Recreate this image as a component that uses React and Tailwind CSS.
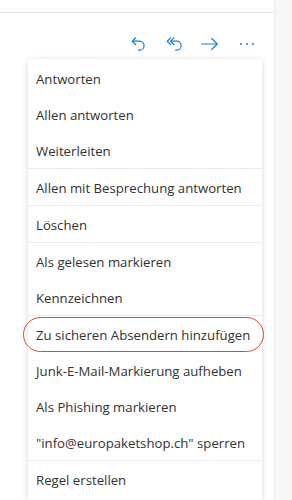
const groups = [
  ["Antworten", "Allen antworten", "Weiterleiten"],
  ["Allen mit Besprechung antworten"],
  ["Löschen"],
  ["Als gelesen markieren", "Kennzeichnen"],
  ["Zu sicheren Absendern hinzufügen", "Junk-E-Mail-Markierung aufheben", "Als Phishing markieren", '"info@europaketshop.ch" sperren'],
  ["Regel erstellen"],
];

function ReplyIcon() {
  return (
    <svg width="18" height="18" viewBox="0 0 16 16" fill="none" stroke="currentColor" strokeWidth="1.1" strokeLinecap="round" strokeLinejoin="round">
      <path d="M5 2.5 2 5.5l3 3" />
      <path d="M2.5 5.5h6a4 4 0 0 1 0 8H7.5" />
    </svg>
  );
}

function ReplyAllIcon() {
  return (
    <svg width="20" height="18" viewBox="0 0 18 16" fill="none" stroke="currentColor" strokeWidth="1.1" strokeLinecap="round" strokeLinejoin="round">
      <path d="M5 2.5 2 5.5l3 3" />
      <path d="M8 2.5 5 5.5l3 3" />
      <path d="M5.5 5.5h5a4 4 0 0 1 0 8h-1" />
    </svg>
  );
}

function ForwardIcon() {
  return (
    <svg width="20" height="18" viewBox="0 0 18 16" fill="none" stroke="currentColor" strokeWidth="1.1" strokeLinecap="round" strokeLinejoin="round">
      <path d="M1.5 8h14" />
      <path d="M10.5 3l5 5-5 5" />
    </svg>
  );
}

export default function App() {
  return (
    <div className="flex h-[500px] w-[292px] overflow-hidden bg-white" style={{ fontFamily: '"Open Sans", "Noto Sans", sans-serif' }}>
      <div className="flex w-[274px] flex-col">
        <div className="h-[13px] border-b border-[#e6e6e6]" />
        <div className="flex h-[46px] items-start justify-end pr-[20px] pt-[22px] text-[#1a7fd4]">
          <ReplyIcon />
          <div className="ml-[17px]">
            <ReplyAllIcon />
          </div>
          <div className="ml-[15px]">
            <ForwardIcon />
          </div>
          <div className="ml-[20px] flex h-[18px] items-center gap-[4px]">
            <span className="h-[2px] w-[2px] rounded-full bg-[#1a7fd4]" />
            <span className="h-[2px] w-[2px] rounded-full bg-[#1a7fd4]" />
            <span className="h-[2px] w-[2px] rounded-full bg-[#1a7fd4]" />
          </div>
        </div>
        <div className="ml-[28px] w-[234px] flex-1 rounded-t-[3px] bg-white shadow-[0_1px_6px_rgba(0,0,0,0.16)]">
          {groups.map((items, gi) => (
            <div key={gi} className={gi > 0 ? "border-t border-[#ebebeb]" : "pt-[1px]"}>
              {items.map((label) => (
                <div key={label} className="relative flex h-[36px] items-center whitespace-nowrap pl-[8px] pt-[3px] text-[13.2px] text-[#323130]">
                  {label}
                  {label.startsWith("Zu sicheren") && (
                    <div className="absolute left-[-5px] right-[-2px] top-[1px] h-[35px] rounded-full border border-[#e04a33]" />
                  )}
                </div>
              ))}
            </div>
          ))}
        </div>
      </div>
      <div className="w-[18px] border-l border-[#efedeb] bg-[#f8f7f6]" />
    </div>
  );
}
